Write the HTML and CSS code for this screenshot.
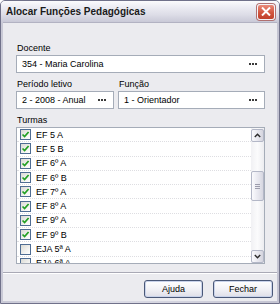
FILE: index.html
```html
<!DOCTYPE html>
<html lang="pt">
<head>
<meta charset="utf-8">
<title>Alocar Funções Pedagógicas</title>
<link rel="stylesheet" href="styles.css">
</head>
<body>
<div class="window">
  <div class="titlebar">
    <span class="title">Alocar Funções Pedagógicas</span>
    <span class="close"><svg width="10" height="9" viewBox="0 0 10 9"><path d="M1 0.5 L9 8.5 M9 0.5 L1 8.5" stroke="#fff" stroke-width="2" fill="none"/></svg></span>
  </div>
  <div class="client">
    <div class="form">
      <div class="field">
        <span class="label">Docente</span>
        <div class="lookup"><span class="value">354 - Maria Carolina</span><span class="dots"></span></div>
      </div>
      <div class="pair">
        <div class="field periodo">
          <span class="label">Período letivo</span>
          <div class="lookup"><span class="value">2 - 2008 - Anual</span><span class="dots"></span></div>
        </div>
        <div class="field funcao">
          <span class="label">Função</span>
          <div class="lookup"><span class="value">1 - Orientador</span><span class="dots"></span></div>
        </div>
      </div>
      <div class="field">
        <span class="label">Turmas</span>
        <div class="listbox">
          <div class="items">
            <div class="item"><span class="check on"><svg width="9" height="9" viewBox="0 0 9 9"><path d="M1.5 4.5 L3.6 6.6 L7.6 2" stroke="#22a022" stroke-width="1.7" fill="none"/></svg></span><span>EF 5 A</span></div>
            <div class="item"><span class="check on"><svg width="9" height="9" viewBox="0 0 9 9"><path d="M1.5 4.5 L3.6 6.6 L7.6 2" stroke="#22a022" stroke-width="1.7" fill="none"/></svg></span><span>EF 5 B</span></div>
            <div class="item"><span class="check on"><svg width="9" height="9" viewBox="0 0 9 9"><path d="M1.5 4.5 L3.6 6.6 L7.6 2" stroke="#22a022" stroke-width="1.7" fill="none"/></svg></span><span>EF 6º A</span></div>
            <div class="item"><span class="check on"><svg width="9" height="9" viewBox="0 0 9 9"><path d="M1.5 4.5 L3.6 6.6 L7.6 2" stroke="#22a022" stroke-width="1.7" fill="none"/></svg></span><span>EF 6º B</span></div>
            <div class="item"><span class="check on"><svg width="9" height="9" viewBox="0 0 9 9"><path d="M1.5 4.5 L3.6 6.6 L7.6 2" stroke="#22a022" stroke-width="1.7" fill="none"/></svg></span><span>EF 7º A</span></div>
            <div class="item"><span class="check on"><svg width="9" height="9" viewBox="0 0 9 9"><path d="M1.5 4.5 L3.6 6.6 L7.6 2" stroke="#22a022" stroke-width="1.7" fill="none"/></svg></span><span>EF 8º A</span></div>
            <div class="item"><span class="check on"><svg width="9" height="9" viewBox="0 0 9 9"><path d="M1.5 4.5 L3.6 6.6 L7.6 2" stroke="#22a022" stroke-width="1.7" fill="none"/></svg></span><span>EF 9º A</span></div>
            <div class="item"><span class="check on"><svg width="9" height="9" viewBox="0 0 9 9"><path d="M1.5 4.5 L3.6 6.6 L7.6 2" stroke="#22a022" stroke-width="1.7" fill="none"/></svg></span><span>EF 9º B</span></div>
            <div class="item"><span class="check"></span><span>EJA 5ª A</span></div>
            <div class="item"><span class="check"></span><span>EJA 6ª A</span></div>
          </div>
          <div class="scrollbar">
            <div class="sbtn"><svg width="7" height="5" viewBox="0 0 7 5"><path d="M0.8 4 L3.5 1.2 L6.2 4" stroke="#2b2b2b" stroke-width="1.4" fill="none"/></svg></div>
            <div class="track">
              <div class="thumb"><span class="grip"></span></div>
            </div>
            <div class="sbtn"><svg width="7" height="5" viewBox="0 0 7 5"><path d="M0.8 1 L3.5 3.8 L6.2 1" stroke="#2b2b2b" stroke-width="1.4" fill="none"/></svg></div>
          </div>
        </div>
      </div>
    </div>
    <div class="footer">
      <button class="btn ajuda">Ajuda</button>
      <button class="btn fechar">Fechar</button>
    </div>
  </div>
</div>
</body>
</html>
```
FILE: styles.css
```css
* { box-sizing: border-box; }
html, body { margin: 0; padding: 0; }
body {
  width: 280px;
  height: 304px;
  font-family: "Liberation Sans", Arial, sans-serif;
  font-size: 9px;
  color: #000;
  background: #ffffff;
}
.window {
  width: 280px;
  height: 304px;
  border: 1px solid #70718a;
  border-radius: 5px 5px 0 0;
  background: linear-gradient(to right, #c9c9d6, #dcdce6 40%, #c4c4d2);
  padding: 0 2px 2px;
  display: flex;
  flex-direction: column;
}
.titlebar {
  height: 21px;
  margin: 0 -2px;
  padding: 0 4px 0 5px;
  display: flex;
  align-items: center;
  justify-content: space-between;
  border-radius: 4px 4px 0 0;
  background: linear-gradient(#fbfbfd 0%, #ececf3 30%, #dddde7 65%, #c9c9d7 100%);
}
.title {
  font-weight: bold;
  font-size: 10px;
  color: #1a1a1a;
}
.close {
  width: 18px;
  height: 16px;
  border: 1px solid #f4f4f8;
  border-radius: 3px;
  background: linear-gradient(#ea8b7a, #d1543e 55%, #c0412c);
  display: flex;
  align-items: center;
  justify-content: center;
  box-shadow: 0 0 0 1px #b07070;
}
.client {
  flex: 1;
  background: #ebebef;
  border-top: 1px solid #b2b2c2;
  display: flex;
  flex-direction: column;
}
.form {
  padding: 20px 12px 8px 13px;
  display: flex;
  flex-direction: column;
  gap: 6px;
}
.field {
  display: flex;
  flex-direction: column;
  gap: 1px;
}
.label {
  display: block;
  height: 11px;
  line-height: 11px;
  padding-left: 1px;
}
.lookup {
  height: 18px;
  background: #fff;
  border: 1px solid #a5acb8;
  display: flex;
  align-items: center;
  justify-content: space-between;
  padding: 0 4px 0 5px;
}
.dots {
  width: 2px;
  height: 2px;
  margin-right: 6px;
  background: #3a3a3a;
  box-shadow: 3px 0 #3a3a3a, -3px 0 #3a3a3a;
}
.pair {
  display: flex;
  gap: 4px;
}
.periodo { width: 98px; }
.funcao { flex: 1; }
.listbox {
  height: 137px;
  background: #fff;
  border: 1px solid #a5acb8;
  display: flex;
}
.items {
  flex: 1;
  overflow: hidden;
}
.item {
  height: 14.3px;
  border-bottom: 1px dotted #dedee2;
  display: flex;
  align-items: center;
  gap: 5px;
  padding-left: 3px;
}
.check {
  width: 11px;
  height: 11px;
  border: 1px solid #4f6d93;
  background: linear-gradient(135deg, #dadad4, #f6f6f4 70%, #ffffff);
  display: flex;
  align-items: center;
  justify-content: center;
}
.scrollbar {
  width: 13px;
  padding-top: 1px;
  display: flex;
  flex-direction: column;
  background: linear-gradient(to right, #f1f1f4, #fbfbfc 50%, #ececf0);
}
.sbtn {
  height: 13px;
  border: 1px solid #b3b7c7;
  border-radius: 2px;
  background: linear-gradient(to right, #fafafd, #e4e4ec 60%, #d4d4de);
  display: flex;
  align-items: center;
  justify-content: center;
}
.track {
  flex: 1;
  padding-top: 29px;
}
.thumb {
  height: 30px;
  border: 1px solid #b3b7c7;
  border-radius: 2px;
  background: linear-gradient(to right, #fafafd, #e6e6ee 60%, #d6d6e0);
  display: flex;
  align-items: center;
  justify-content: center;
}
.grip {
  width: 5px;
  height: 1px;
  background: #9c9cac;
  box-shadow: 0 -2px #9c9cac, 0 2px #9c9cac;
}
.footer {
  flex: 1;
  border-top: 1px solid #a9a9b5;
  box-shadow: inset 0 1px 0 #ffffff;
  padding: 7px 4px 3px 0;
  display: flex;
  justify-content: flex-end;
  align-items: flex-start;
  gap: 10px;
}
.btn {
  height: 18px;
  margin: 0;
  padding: 0;
  font-family: "Liberation Sans", Arial, sans-serif;
  font-size: 9px;
  color: #000;
  border: 1px solid #4a5878;
  border-radius: 3px;
  background: linear-gradient(#ffffff, #f2f2f6 50%, #dedee8);
  box-shadow: inset 0 0 0 1px #c9d3ea;
}
.ajuda { width: 59px; }
.fechar { width: 60px; }
```
